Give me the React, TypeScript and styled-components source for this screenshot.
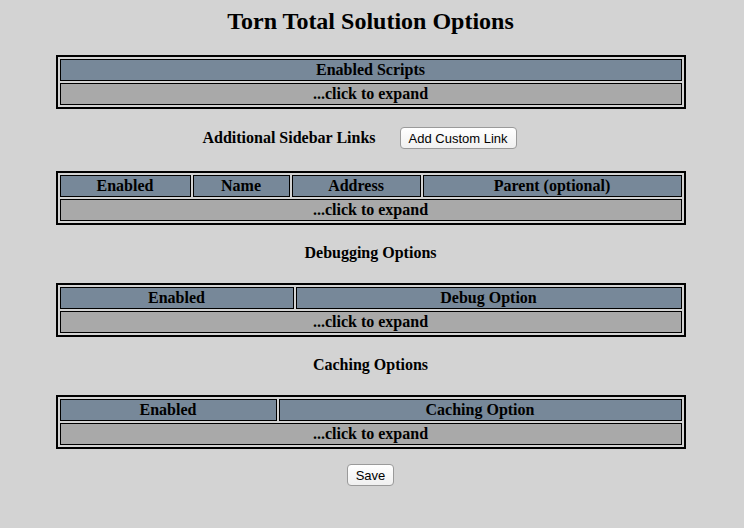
import styled, { createGlobalStyle } from "styled-components";

const GlobalStyle = createGlobalStyle`
  html, body {
    margin: 0;
    padding: 0;
    background: #d3d3d3;
  }
  body {
    font-family: "Liberation Serif", "Times New Roman", serif;
    color: #000;
  }
`;

const Page = styled.div`
  display: flex;
  flex-direction: column;
  align-items: center;
  padding: 8px 0 40px;
  margin-left: -3px;
`;

const Title = styled.h1`
  margin: 0 0 20px;
  font-size: 24px;
  line-height: 27px;
  font-weight: 700;
`;

const OptionsTable = styled.div<{ $cols: string }>`
  display: grid;
  grid-template-columns: ${(p) => p.$cols};
  gap: 2px;
  padding: 2px;
  border: 2px solid #000;
  width: 622px;
`;

const HeaderCell = styled.div`
  background: #778899;
  border: 1px solid #000;
  padding: 1px;
  font-size: 16px;
  line-height: 18px;
  font-weight: 700;
  text-align: center;
`;

const ExpandCell = styled.div`
  grid-column: 1 / -1;
  background: #a9a9a9;
  border: 1px solid #000;
  padding: 1px;
  font-size: 16px;
  line-height: 18px;
  font-weight: 700;
  text-align: center;
  cursor: pointer;
`;

const LinkRow = styled.div`
  display: flex;
  align-items: center;
  gap: 24px;
  margin: 18px 0 22px;
  padding-right: 22px;
`;

const Label = styled.span`
  font-size: 16px;
  font-weight: 700;
`;

const SectionHeading = styled.div`
  font-size: 16px;
  line-height: 20px;
  font-weight: 700;
  margin: 18px 0 20px;
`;

const Button = styled.button`
  font-family: "Liberation Sans", Arial, sans-serif;
  font-size: 13px;
  height: 22px;
  padding: 0 8px;
  background: linear-gradient(#ffffff, #f0f0f0);
  border: 1px solid #9a9a9a;
  border-radius: 4px;
  color: #000;
`;

const SaveButton = styled(Button)`
  margin-top: 15px;
`;

const Table = ({ cols, headers }: { cols: string; headers: string[] }) => (
  <OptionsTable $cols={cols}>
    {headers.map((h) => (
      <HeaderCell key={h}>{h}</HeaderCell>
    ))}
    <ExpandCell>...click to expand</ExpandCell>
  </OptionsTable>
);

export default function App() {
  return (
    <>
      <GlobalStyle />
      <Page>
        <Title>Torn Total Solution Options</Title>
        <Table cols="1fr" headers={["Enabled Scripts"]} />
        <LinkRow>
          <Label>Additional Sidebar Links</Label>
          <Button>Add Custom Link</Button>
        </LinkRow>
        <Table
          cols="131px 97px 129px 1fr"
          headers={["Enabled", "Name", "Address", "Parent (optional)"]}
        />
        <SectionHeading>Debugging Options</SectionHeading>
        <Table cols="234px 1fr" headers={["Enabled", "Debug Option"]} />
        <SectionHeading>Caching Options</SectionHeading>
        <Table cols="217px 1fr" headers={["Enabled", "Caching Option"]} />
        <SaveButton>Save</SaveButton>
      </Page>
    </>
  );
}
